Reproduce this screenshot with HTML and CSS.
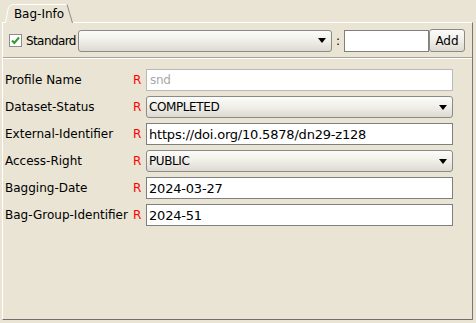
FILE: index.html
```html
<!DOCTYPE html>
<html>
<head>
<meta charset="utf-8">
<link rel="stylesheet" href="styles.css">
</head>
<body>
<div class="window">
  <div class="tabs">
    <div class="tab">
      <svg class="tab-shape" width="68" height="19" viewBox="0 0 68 19">
        <path d="M0.5 19 L3 5.5 Q4 0.5 9 0.5 L62 0.5 L67.5 19 Z" fill="#e9e4d4"/>
        <path d="M0.5 19 L3 5.5 Q4 0.5 9 0.5 L62 0.5" fill="none" stroke="#ffffff" stroke-width="1"/>
        <path d="M62 0.5 L67.5 19" fill="none" stroke="#8a8a8a" stroke-width="1"/>
      </svg>
      <span class="tab-label">Bag-Info</span>
    </div>
  </div>
  <div class="panel">
    <div class="toolbar">
      <label class="check">
        <svg class="box" width="13" height="13" viewBox="0 0 13 13">
          <rect x="0.5" y="0.5" width="12" height="12" fill="#ffffff" stroke="#8c8c8c"/>
          <path d="M3 6.5 L5.3 9 L10 3.5" fill="none" stroke="#2f9a2a" stroke-width="2"/>
        </svg>
        <span class="check-text">Standard</span>
      </label>
      <div class="combo combo-wide"><span class="combo-val"></span><span class="arrow"></span></div>
      <span class="colon">:</span>
      <div class="field field-small"></div>
      <button class="btn">Add</button>
    </div>
    <div class="sep"></div>
    <div class="form">
      <div class="lbl">Profile Name</div><div class="req">R</div><div class="field disabled">snd</div>
      <div class="lbl">Dataset-Status</div><div class="req">R</div><div class="combo"><span class="combo-val">COMPLETED</span><span class="arrow"></span></div>
      <div class="lbl">External-Identifier</div><div class="req">R</div><div class="field">https://doi.org/10.5878/dn29-z128</div>
      <div class="lbl">Access-Right</div><div class="req">R</div><div class="combo"><span class="combo-val">PUBLIC</span><span class="arrow"></span></div>
      <div class="lbl">Bagging-Date</div><div class="req">R</div><div class="field">2024-03-27</div>
      <div class="lbl">Bag-Group-Identifier</div><div class="req">R</div><div class="field">2024-51</div>
    </div>
  </div>
</div>
</body>
</html>
```
FILE: styles.css
```css
* { box-sizing: border-box; }
html, body { margin: 0; padding: 0; }
body {
  background: #e9e4d4;
  font-family: "DejaVu Sans", "Liberation Sans", sans-serif;
  font-size: 12px;
  color: #000;
}
.window { padding: 4px 0 0 2px; width: 476px; height: 323px; overflow: hidden; }
.tabs { display: flex; padding-left: 3px; height: 18px; }
.tab {
  position: relative;
  width: 68px;
  height: 19px;
  display: flex;
  align-items: center;
  justify-content: center;
  z-index: 1;
}
.tab-shape { position: absolute; left: 0; top: 0; }
.tab-label { position: relative; line-height: 14px; padding-top: 1px; }
.panel {
  width: 471px;
  height: 298px;
  border-top: 1px solid #ffffff;
  border-left: 1px solid #ffffff;
  border-right: 1px solid #767676;
  border-bottom: 1px solid #6f6f6f;
}
.toolbar {
  display: flex;
  align-items: center;
  padding: 6px 0 0 6px;
  height: 29px;
}
.check { display: flex; align-items: center; gap: 4px; width: 69px; flex: none; }
.check-text { letter-spacing: -0.6px; white-space: nowrap; }
.box { display: block; flex: none; }
.combo {
  display: flex;
  align-items: center;
  height: 22px;
  border: 1px solid #8a8a8a;
  border-radius: 3px;
  background: linear-gradient(#fbfbf8, #f1f0ea 45%, #dcdad0);
  padding-left: 2px;
  padding-right: 5px;
}
.combo-wide { width: 254px; flex: none; }
.combo-val { flex: 1; white-space: nowrap; letter-spacing: -0.4px; }
.arrow {
  width: 0; height: 0;
  border-left: 4px solid transparent;
  border-right: 4px solid transparent;
  border-top: 5px solid #000;
}
.colon { width: 12px; text-align: center; flex: none; }
.field {
  height: 22px;
  border: 1px solid #7f7f7f;
  background: #fff;
  padding: 0 2px;
  display: flex;
  align-items: center;
  white-space: nowrap;
  font-size: 13px;
  letter-spacing: -0.2px;
}
.field-small { width: 85px; flex: none; }
.field.disabled { border-color: #b9b9b9; color: #a8a8a8; font-size: 12px; letter-spacing: -0.3px; padding-left: 3px; }
.btn {
  width: 36px;
  height: 23px;
  border: 1px solid #8a8a8a;
  border-radius: 3px;
  background: linear-gradient(#fbfbf8, #f1f0ea 45%, #dcdad0);
  font: inherit;
  padding: 0;
  color: #000;
  flex: none;
}
.sep {
  margin-top: 5px;
  height: 2px;
  border-top: 1px solid #a8a49a;
  border-bottom: 1px solid #ffffff;
}
.form {
  display: grid;
  grid-template-columns: 128px 13px 307px;
  grid-auto-rows: 22px;
  row-gap: 5px;
  padding: 10px 0 0 2px;
  align-items: center;
}
.lbl { white-space: nowrap; }
.req { color: #ff0000; }
```
